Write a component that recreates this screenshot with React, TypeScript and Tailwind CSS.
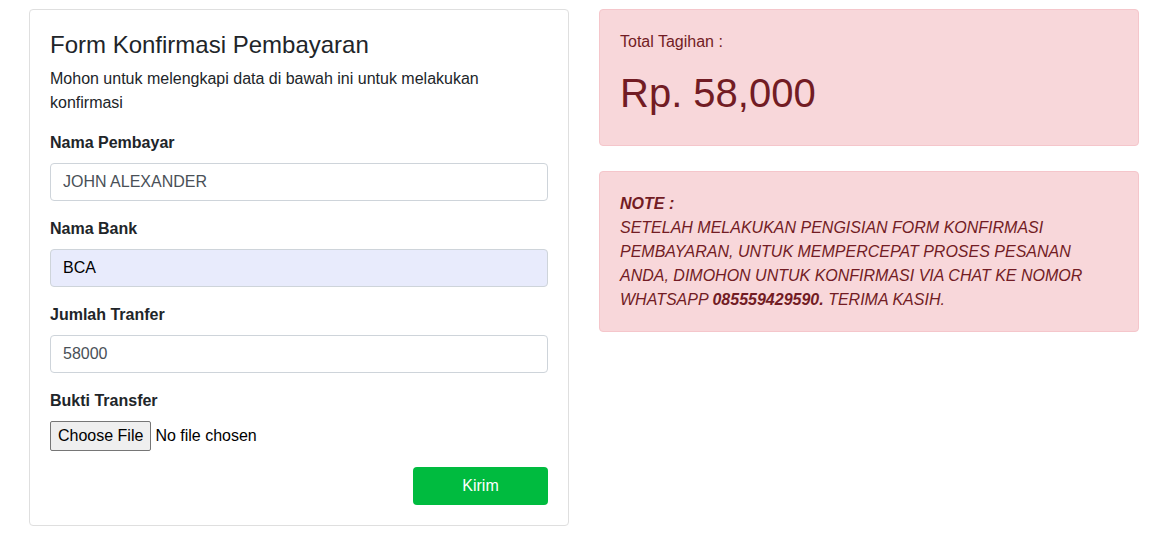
export default function App() {
    return (
        <div className="min-h-screen bg-white pl-[29px] pt-[9px] font-['Liberation_Sans',Arial,sans-serif] text-[16px] leading-[24px] text-[#212529]">
            <div className="flex items-start gap-[30px]">
                {/* Form card */}
                <div className="w-[540px] rounded-[4px] border border-[#dfdfdf] p-5">
                    <h3 className="mb-2 text-[24px] leading-[29px] font-medium">Form Konfirmasi Pembayaran</h3>
                    <p className="mb-4">
                        Mohon untuk melengkapi data di bawah ini untuk melakukan konfirmasi
                    </p>

                    <div className="mb-4">
                        <label className="mb-2 block font-bold">Nama Pembayar</label>
                        <input
                            readOnly
                            defaultValue="JOHN ALEXANDER"
                            className="block h-[38px] w-full rounded-[4px] border border-[#ced4da] px-3 text-[#495057] outline-none"
                        />
                    </div>

                    <div className="mb-4">
                        <label className="mb-2 block font-bold">Nama Bank</label>
                        <input
                            readOnly
                            defaultValue="BCA"
                            className="block h-[38px] w-full rounded-[4px] border border-[#ced4da] bg-[#e8ebfc] px-3 text-[#000000] outline-none"
                        />
                    </div>

                    <div className="mb-4">
                        <label className="mb-2 block font-bold">Jumlah Tranfer</label>
                        <input
                            readOnly
                            defaultValue="58000"
                            className="block h-[38px] w-full rounded-[4px] border border-[#ced4da] px-3 text-[#495057] outline-none"
                        />
                    </div>

                    <div className="mb-4">
                        <label className="mb-2 block font-bold">Bukti Transfer</label>
                        <div className="flex h-[30px] items-center">
                            <span className="flex h-[30px] items-center rounded-[2px] border border-[#767676] bg-[#efefef] px-[7px] text-black">
                                Choose File
                            </span>
                            <span className="ml-[4px] text-black">No file chosen</span>
                        </div>
                    </div>

                    <div className="flex justify-end">
                        <button className="h-[38px] w-[135px] rounded-[4px] bg-[#00bb3f] text-white">Kirim</button>
                    </div>
                </div>

                {/* Right column */}
                <div className="flex w-[540px] flex-col gap-[25px] text-[#721c24]">
                    <div className="rounded-[4px] border border-[#f5c6cb] bg-[#f8d7da] p-5">
                        <p className="mb-4 text-[16px] leading-[23px]">Total Tagihan :</p>
                        <h1 className="mb-2 text-[40px] leading-[48px]">Rp. 58,000</h1>
                    </div>

                    <div className="rounded-[4px] border border-[#f5c6cb] bg-[#f8d7da] px-5 pt-5 pb-[19px] italic">
                        <b>NOTE :</b>
                        <br />
                        SETELAH MELAKUKAN PENGISIAN FORM KONFIRMASI PEMBAYARAN, UNTUK MEMPERCEPAT PROSES PESANAN
                        ANDA, DIMOHON UNTUK KONFIRMASI VIA CHAT KE NOMOR WHATSAPP <b>085559429590.</b> TERIMA KASIH.
                    </div>
                </div>
            </div>
        </div>
    );
}
